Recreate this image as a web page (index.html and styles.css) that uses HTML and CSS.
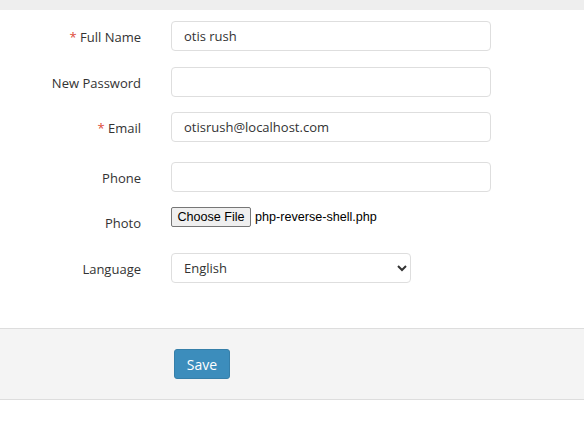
FILE: index.html
```html
<!DOCTYPE html>
<html>
<head>
<meta charset="utf-8">
<link rel="stylesheet" href="styles.css">
</head>
<body>
<div class="topbar"></div>
<form class="form">
  <div class="row gap16">
    <label class="lbl"><span class="req">*</span> Full Name</label>
    <div class="field"><input class="ctl" type="text" value="otis rush"></div>
  </div>
  <div class="row">
    <label class="lbl">New Password</label>
    <div class="field"><input class="ctl" type="password" value=""></div>
  </div>
  <div class="row gap20">
    <label class="lbl"><span class="req">*</span> Email</label>
    <div class="field"><input class="ctl" type="text" value="otisrush@localhost.com"></div>
  </div>
  <div class="row">
    <label class="lbl">Phone</label>
    <div class="field"><input class="ctl" type="text" value=""></div>
  </div>
  <div class="row gap16">
    <label class="lbl">Photo</label>
    <div class="field file"><span class="file-btn">Choose File</span><span class="file-name">php-reverse-shell.php</span></div>
  </div>
  <div class="row last">
    <label class="lbl">Language</label>
    <div class="field"><select class="ctl sel"><option>English</option></select></div>
  </div>
</form>
<div class="footer">
  <button class="btn" type="button">Save</button>
</div>
</body>
</html>
```
FILE: styles.css
```css
html, body {
  margin: 0;
  padding: 0;
  background: #fff;
}
body {
  font-family: "Open Sans", "Liberation Sans", Arial, sans-serif;
  font-size: 13px;
  color: #333;
}
.topbar {
  height: 10px;
  background: #eeeeee;
}
.form {
  display: flex;
  flex-direction: column;
  padding-top: 11px;
}
.row {
  display: flex;
  align-items: flex-start;
  gap: 30px;
  margin-bottom: 15px;
  height: 30px;
}
.row.gap16 { margin-bottom: 16px; }
.row.gap20 { margin-bottom: 20px; }
.row.last { margin-bottom: 45px; }
.lbl {
  width: 141px;
  flex: none;
  text-align: right;
  line-height: 30px;
  padding-top: 1px;
  font-size: 13px;
  color: #333;
}
.req {
  color: #dd4b39;
}
.field {
  width: 320px;
}
.ctl {
  box-sizing: border-box;
  display: block;
  width: 320px;
  height: 30px;
  border: 1px solid #dedede;
  border-radius: 4px;
  padding: 0 12px;
  font-family: "Open Sans", "Liberation Sans", Arial, sans-serif;
  font-size: 13px;
  color: #333;
  background: #fff;
  outline: none;
}
.sel {
  width: 240px;
  padding: 0 8px;
}
.file {
  display: flex;
  align-items: center;
  font-family: "Liberation Sans", Arial, sans-serif;
  font-size: 12.6px;
  color: #000;
}
.file-btn {
  box-sizing: border-box;
  width: 80px;
  height: 20px;
  line-height: 18px;
  text-align: center;
  background: #efefef;
  border: 1px solid #767676;
  border-radius: 2px;
  color: #000;
}
.file-name {
  margin-left: 4px;
}
.footer {
  border-top: 1px solid #ddd;
  border-bottom: 1px solid #ddd;
  background: #f4f4f4;
  padding: 20px 0 20px 174px;
}
.btn {
  box-sizing: border-box;
  width: 56px;
  height: 30px;
  background: #3c8dbc;
  border: 1px solid #367fa9;
  border-radius: 3px;
  color: #fff;
  font-family: "Open Sans", "Liberation Sans", Arial, sans-serif;
  font-size: 14px;
  padding: 0;
  display: block;
}
```
